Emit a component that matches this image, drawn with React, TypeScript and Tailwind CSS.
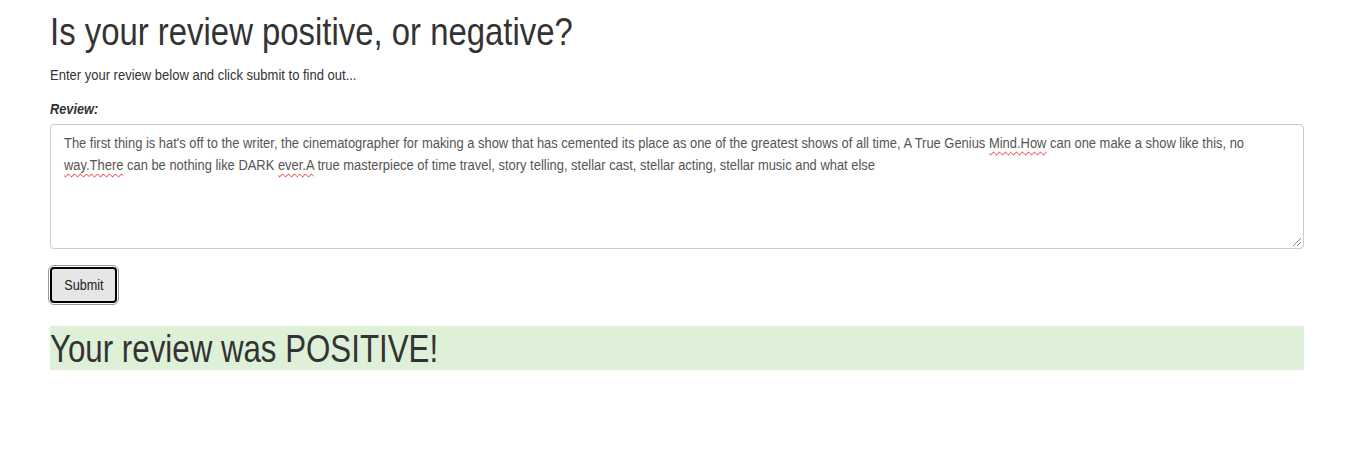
import React from "react";

const S = "inline-block origin-left whitespace-nowrap";

function Squiggle({ children }: { children: React.ReactNode }) {
  return (
    <span className="underline decoration-wavy decoration-[#e02020] decoration-1 underline-offset-[3px]">
      {children}
    </span>
  );
}

export default function App() {
  return (
    <div
      className="min-h-[462px] bg-white text-[#333333] px-[50px] pt-[8px]"
      style={{ fontFamily: '"Liberation Sans", Arial, sans-serif' }}
    >
      <h1 className="text-[39.6px] leading-[46px] font-normal">
        <span className={`${S} [transform:scaleX(0.831)]`}>Is your review positive, or negative?</span>
      </h1>
      <p className="mt-[10px] text-[15.4px] leading-[22px]">
        <span className={`${S} [transform:scaleX(0.845)]`}>Enter your review below and click submit to find out...</span>
      </p>
      <div className="mt-[12px] text-[15.4px] leading-[22px] font-bold italic">
        <span className={`${S} [transform:scaleX(0.83)]`}>Review:</span>
      </div>
      <div
        role="textbox"
        className="relative mt-[4px] w-[1254px] h-[125px] border border-[#cccccc] rounded-[4px] pl-[13px] pr-[14px] pt-[7px] text-[15.4px] leading-[22px] text-[#555555] overflow-hidden"
      >
        <div className="w-[1460px] origin-left [transform:scaleX(0.84)]">
          The first thing is hat's off to the writer, the cinematographer for making a show that has cemented its place
          as one of the greatest shows of all time, A True Genius <Squiggle>Mind.How</Squiggle> can one make a show like
          this, no <Squiggle>way.There</Squiggle> can be nothing like DARK <Squiggle>ever.A</Squiggle> true masterpiece
          of time travel, story telling, stellar cast, stellar acting, stellar music and what else
        </div>
        <svg className="absolute right-[2px] bottom-[2px]" width="9" height="9" viewBox="0 0 9 9">
          <line x1="1" y1="9" x2="9" y2="1" stroke="#888" strokeWidth="1" />
          <line x1="5" y1="9" x2="9" y2="5" stroke="#888" strokeWidth="1" />
        </svg>
      </div>
      <button className="mt-[18px] flex items-center justify-center w-[67px] h-[36px] rounded-[4px] border-2 border-black outline outline-1 outline-[#999] outline-offset-[1px] bg-[#e6e6e6] text-[15.4px] text-[#222]">
        <span className="inline-block [transform:scaleX(0.82)]">Submit</span>
      </button>
      <div className="mt-[23px] w-[1254px] h-[44px] bg-[#dff0d8] text-[39.6px] leading-[44px]">
        <span className={`${S} [transform:scaleX(0.79)]`}>Your review was POSITIVE!</span>
      </div>
    </div>
  );
}
